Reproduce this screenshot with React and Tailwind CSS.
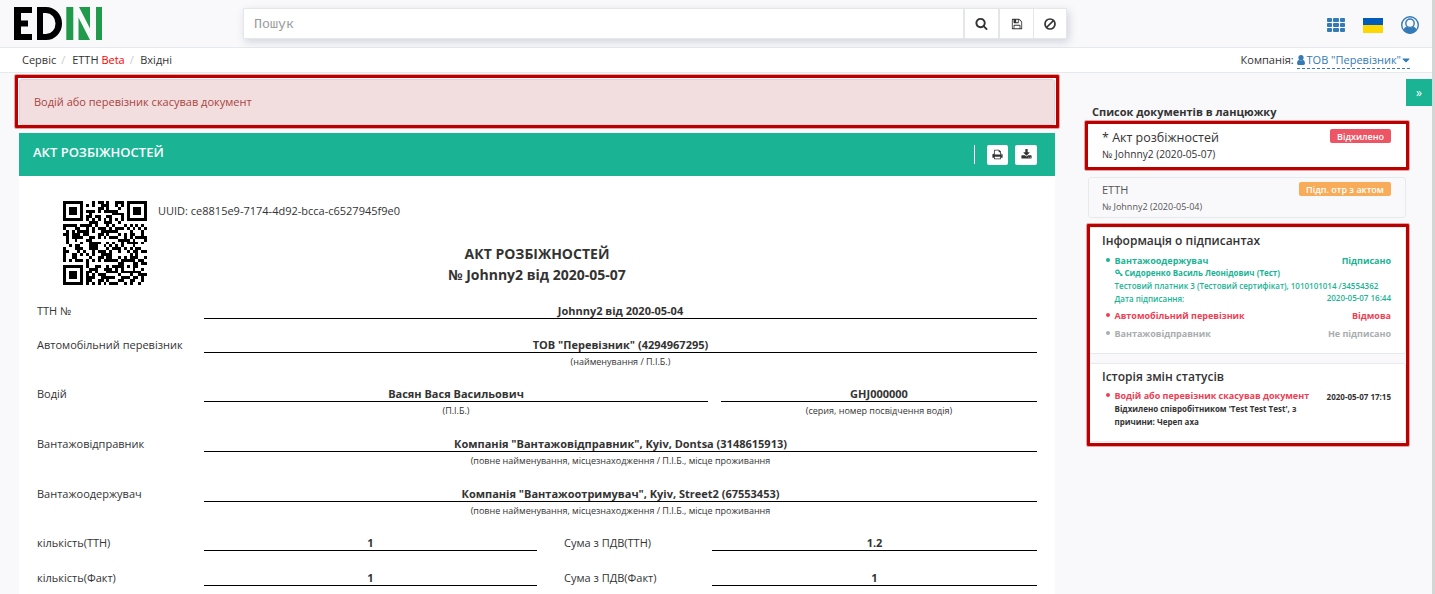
import React from 'react';
import { FaCaretDown } from 'react-icons/fa';

/* ---------- QR code, version 3 (29 x 29), level L, byte mode ---------- */
const N = 29;
const DATA_BYTES = 55;
const EC_BYTES = 15;

function gfMul(a, b) {
  let r = 0;
  for (let i = 7; i >= 0; i--) {
    r = (r << 1) ^ ((r >>> 7) * 0x11d);
    r ^= ((b >>> i) & 1) * a;
  }
  return r & 0xff;
}

function ecc(data, degree) {
  const gen = new Array(degree).fill(0);
  gen[degree - 1] = 1;
  let root = 1;
  for (let i = 0; i < degree; i++) {
    for (let j = 0; j < degree; j++) {
      gen[j] = gfMul(gen[j], root);
      if (j + 1 < degree) gen[j] ^= gen[j + 1];
    }
    root = gfMul(root, 2);
  }
  const res = new Array(degree).fill(0);
  data.forEach((b) => {
    const f = b ^ res.shift();
    res.push(0);
    gen.forEach((g, i) => { res[i] ^= gfMul(g, f); });
  });
  return res;
}

const MASK = 2;
const masked = (x) => x % 3 === 0;

function build(text) {
  const bits = [];
  const push = (v, n) => { for (let i = n - 1; i >= 0; i--) bits.push((v >>> i) & 1); };
  push(4, 4);
  push(text.length, 8);
  [...text].forEach((c) => push(c.charCodeAt(0), 8));
  push(0, 4);
  const bytes = [];
  for (let i = 0; i < bits.length; i += 8) bytes.push(parseInt(bits.slice(i, i + 8).join(''), 2));
  for (let p = 0xec; bytes.length < DATA_BYTES; p ^= 0xfd) bytes.push(p);
  const all = bytes.concat(ecc(bytes, EC_BYTES));

  const m = Array.from({ length: N }, () => new Array(N).fill(false));
  const fn = Array.from({ length: N }, () => new Array(N).fill(false));
  const set = (x, y, v) => {
    if (x >= 0 && x < N && y >= 0 && y < N) { m[y][x] = !!v; fn[y][x] = true; }
  };
  for (let i = 0; i < N; i++) { set(6, i, i % 2 === 0); set(i, 6, i % 2 === 0); }
  [[3, 3], [N - 4, 3], [3, N - 4]].forEach(([cx, cy]) => {
    for (let dy = -4; dy <= 4; dy++) for (let dx = -4; dx <= 4; dx++) {
      const d = Math.max(Math.abs(dx), Math.abs(dy));
      set(cx + dx, cy + dy, d !== 2 && d !== 4);
    }
  });
  for (let dy = -2; dy <= 2; dy++) for (let dx = -2; dx <= 2; dx++) {
    set(22 + dx, 22 + dy, Math.max(Math.abs(dx), Math.abs(dy)) !== 1);
  }
  const d = (1 << 3) | MASK;
  let rem = d;
  for (let i = 0; i < 10; i++) rem = (rem << 1) ^ ((rem >>> 9) * 0x537);
  const f = ((d << 10) | rem) ^ 0x5412;
  const bit = (i) => (f >>> i) & 1;
  for (let i = 0; i <= 5; i++) set(8, i, bit(i));
  set(8, 7, bit(6)); set(8, 8, bit(7)); set(7, 8, bit(8));
  for (let i = 9; i < 15; i++) set(14 - i, 8, bit(i));
  for (let i = 0; i < 8; i++) set(N - 1 - i, 8, bit(i));
  for (let i = 8; i < 15; i++) set(8, N - 15 + i, bit(i));
  set(8, N - 8, 1);

  let k = 0;
  for (let right = N - 1; right >= 1; right -= 2) {
    if (right === 6) right = 5;
    for (let v = 0; v < N; v++) for (let j = 0; j < 2; j++) {
      const x = right - j;
      const y = ((right + 1) & 2) === 0 ? N - 1 - v : v;
      if (!fn[y][x]) {
        const b = k < all.length * 8 ? (all[k >>> 3] >>> (7 - (k & 7))) & 1 : 0;
        m[y][x] = !!b !== masked(x);
        k++;
      }
    }
  }
  return m;
}

const UUID = 'ce8815e9-7174-4d92-bcca-c6527945f9e0';

function Qr() {
  const path = build(UUID).map((row, y) => row.map((on, x) => (on ? `M${x} ${y}h1v1h-1z` : '')).join('')).join('');
  return (
    <svg viewBox="0 0 29 29" className="h-[84px] w-[84px] shrink-0" shapeRendering="crispEdges"><path d={path} /></svg>
  );
}

/* ---------- Font Awesome 4 style glyphs ---------- */
const Glyph = ({ d, className, box = '0 0 1792 1792' }) => (
  <svg viewBox={box} className={className} fill="currentColor"><path d={d} /></svg>
);
const SEARCH = 'M1216 832q0-185-131.500-316.500t-316.500-131.500-316.500 131.500-131.500 316.500 131.500 316.500 316.500 131.500 316.500-131.500 131.500-316.500zm512 832q0 52-38 90t-90 38q-54 0-90-38l-343-342q-179 124-399 124-143 0-273.500-55.500t-225-150-150-225-55.500-273.500 55.500-273.500 150-225 225-150 273.500-55.500 273.500 55.500 225 150 150 225 55.500 273.500q0 220-124 399l343 343q37 37 37 90z';
const SAVE = 'M512 1536h768v-384h-768v384zm896 0h128v-896q0-14-10-38.500t-20-34.500l-281-281q-10-10-34-20t-39-10v416q0 40-28 68t-68 28h-576q-40 0-68-28t-28-68v-416h-128v1280h128v-416q0-40 28-68t68-28h832q40 0 68 28t28 68v416zm-384-928v-320q0-13-9.500-22.500t-22.500-9.500h-192q-13 0-22.500 9.500t-9.500 22.500v320q0 13 9.500 22.500t22.500 9.500h192q13 0 22.500-9.500t9.500-22.500zm640 32v928q0 40-28 68t-68 28h-1344q-40 0-68-28t-28-68v-1344q0-40 28-68t68-28h928q40 0 88 20t76 48l280 280q28 28 48 76t20 88z';
const PRINT = 'M448 1536h896v-256h-896v256zm0-640h896v-384h-160q-40 0-68-28t-28-68v-160h-640v640zm1152 64q0-26-19-45t-45-19-45 19-19 45 19 45 45 19 45-19 19-45zm128 0v416q0 13-9.500 22.500t-22.500 9.500h-224v160q0 40-28 68t-68 28h-960q-40 0-68-28t-28-68v-160h-224q-13 0-22.500-9.500t-9.500-22.500v-416q0-79 56.500-135.500t135.500-56.500h64v-544q0-40 28-68t68-28h672q40 0 88 20t76 48l152 152q28 28 48 76t20 88v256h64q79 0 135.500 56.500t56.500 135.500z';
const DOWNLOAD = 'M1344 1344q0-26-19-45t-45-19-45 19-19 45 19 45 45 19 45-19 19-45zm256 0q0-26-19-45t-45-19-45 19-19 45 19 45 45 19 45-19 19-45zm128-224v320q0 40-28 68t-68 28h-1472q-40 0-68-28t-28-68v-320q0-40 28-68t68-28h465l135 136q58 56 136 56t136-56l136-136h464q40 0 68 28t28 68zm-325-569q17 41-14 70l-448 448q-18 19-45 19t-45-19l-448-448q-31-29-14-70 17-39 59-39h256v-448q0-26 19-45t45-19h256q26 0 45 19t19 45v448h256q42 0 59 39z';

function Logo() {
  return (
    <svg viewBox="0 0 88 33" className="h-[33px] w-[88px]">
      <path d="M0 0h18v6H7v7.500h7v6H7V27h11v6H0z" />
      <path fillRule="evenodd" d="M23 0h9a16 16.500 0 0 1 0 33h-9zM29 6v21h3a9.500 10.500 0 0 0 0-21z" />
      <path fill="#229a4b" d="M52.300 0h7v33h-7zM65 0h11v21.500zM64.500 10.500 76 33H64.500zM82 0h6v33h-6z" />
    </svg>
  );
}

const Field = ({ children, className = '' }) => (
  <div className={'h-[17px] border-b border-black text-center text-[11px] leading-[18px] font-bold ' + className}>{children}</div>
);
const Note = ({ children }) => <div className="pt-[2px] text-center text-[9px] leading-[13px]">{children}</div>;
const Label = ({ children, className = '' }) => <div className={'shrink-0 leading-[18px] ' + className}>{children}</div>;

const Row = ({ label, note, children, className }) => (
  <div className={'flex ' + className}>
    <Label className="w-[167px]">{label}</Label>
    <div className="flex-1"><Field>{children}</Field>{note && <Note>{note}</Note>}</div>
  </div>
);
const Pair = ({ a, av, b, bv, className }) => (
  <div className={'flex ' + className}>
    <Label className="w-[167px]">{a}</Label>
    <Field className="w-[333px]">{av}</Field>
    <Label className="w-[175px] pl-[27px]">{b}</Label>
    <Field className="flex-1">{bv}</Field>
  </div>
);

const Frame = ({ className }) => (
  <div className={'pointer-events-none absolute rounded-[1px] border-3 border-[#bb0000] outline outline-[#bb0000]/35 ' + className} />
);
const Dot = () => <span className="mt-[4px] mr-[4.500px] h-[4px] w-[4px] shrink-0 rounded-full bg-current" />;

export default function App() {
  return (
    <div className="relative flex h-[594px] w-[1435px] flex-col overflow-hidden bg-[#f9f9fb] font-['Open_Sans','Noto_Sans',sans-serif] text-[11px] text-[#333]">
      <header className="flex h-[48px] shrink-0 border-b border-[#e7eaec] pl-[14px]">
        <div className="w-[229px] pt-[7px]"><Logo /></div>
        <div className="mt-[8px] flex h-[31px] w-[824px] border border-[#e5e6e7] bg-white text-[#333] shadow-[2px_3px_8px_rgba(120,130,160,0.3)]">
          <div className="flex-1 pl-[10px] font-['Liberation_Mono',monospace] text-[13.333px] leading-[31px] text-[#999]">Пошук</div>
          <div className="flex w-[35px] items-center justify-center border-l-2 border-[#e5e6e7]"><Glyph d={SEARCH} className="h-[13px] w-[13px]" /></div>
          <div className="flex w-[35px] items-center justify-center border-l-2 border-[#e5e6e7]"><Glyph d={SAVE} className="h-[12px] w-[12px]" /></div>
          <div className="flex w-[33px] items-center justify-center border-l border-[#e5e6e7]">
            <svg viewBox="0 0 12 12" className="h-[12px] w-[12px]" fill="none" stroke="currentColor" strokeWidth="1.700"><circle cx="6" cy="6" r="5" /><path d="M2.500 9.500l7-7" /></svg>
          </div>
        </div>
        <div className="flex flex-1 items-center justify-end gap-[18px] pt-[3px] pr-[16px] text-[#337ab7]">
          <div className="grid grid-cols-3 gap-[1px]">
            {[0, 1, 2, 3, 4, 5, 6, 7, 8].map((i) => <span key={i} className="h-[4px] w-[5.500px] rounded-[1px] bg-current" />)}
          </div>
          <div className="h-[15px] w-[20px] bg-[#ffd700]"><div className="h-1/2 bg-[#005bbb]" /></div>
          <svg viewBox="0 0 18 18" className="h-[18px] w-[18px]">
            <circle cx="9" cy="9" r="8.300" fill="none" stroke="currentColor" strokeWidth="1.400" />
            <path fill="currentColor" d="M2.600 13.500q.8-2.300 3.200-2.900 1.300 1.400 3.200 1.400t3.200-1.400q2.400.6 3.200 2.900-2.400 3.900-6.400 3.900t-6.400-3.900z" />
            <circle cx="9" cy="7.200" r="4.200" fill="none" stroke="currentColor" strokeWidth="1.400" />
          </svg>
        </div>
      </header>

      <nav className="flex h-[25px] shrink-0 items-center justify-between border-b border-[#e7eaec] bg-white pr-[25px] pl-[22px]">
        <div className="flex">
          <span>Сервіс</span><span className="w-[16px] pl-[5px] text-[#ccc]">/</span>
          <span>ЕТТН <span className="text-[#f00]">Beta</span></span><span className="w-[15.500px] pl-[5px] text-[#ccc]">/</span>
          <span>Вхідні</span>
        </div>
        <div className="flex leading-[16px]">
          Компанія:&nbsp;
          <span className="flex items-center border-b border-dashed border-[#337ab7] text-[#337ab7]">
            <svg viewBox="0 0 8 10" className="mr-[2px] h-[10px] w-[8px]" fill="currentColor"><circle cx="4" cy="2.700" r="2.600" /><path d="M2 4.800q-2 .6-2 3.500 0 1.700 1.500 1.700h5q1.500 0 1.500-1.700 0-2.900-2-3.500-2 1.500-4 0z" /></svg>
            ТОВ "Перевізник"<FaCaretDown className="ml-[1px] h-[12px] w-[8px]" />
          </span>
        </div>
      </nav>

      <div className="flex flex-1 pl-[19px]">
        <main className="flex w-[1036px] flex-col pt-[6px]">
          <div className="h-[46px] shrink-0 rounded-[3px] border border-[#e6cfd6] bg-[#f2dede] pl-[14px] leading-[43px] text-[#a94442]">
            Водій або перевізник скасував документ
          </div>
          <div className="mt-[8px] flex h-[43px] shrink-0 justify-between bg-[#1ab394] pr-[18px] pl-[14px] text-white">
            <h1 className="pt-[9px] text-[13px] leading-[20px] font-semibold">АКТ РОЗБІЖНОСТЕЙ</h1>
            <div className="flex items-center text-[#333]">
              <span className="mr-[12px] h-[19px] w-px bg-white" />
              <span className="mr-[7px] flex h-[20px] w-[21px] items-center justify-center rounded-[2px] bg-white"><Glyph d={PRINT} className="h-[11px] w-[11px]" /></span>
              <span className="flex h-[20px] w-[22px] items-center justify-center rounded-[2px] bg-white"><Glyph d={DOWNLOAD} className="h-[11px] w-[11px]" /></span>
            </div>
          </div>

          <section className="flex-1 bg-white px-[18px] pt-[25px]">
            <div className="flex h-[42px] pl-[26px]"><Qr /><div className="pt-[1px] pl-[11px] leading-[18px]">UUID: {UUID}</div></div>
            <h2 className="h-[59px] text-center text-[14px] leading-[21px] font-bold">АКТ РОЗБІЖНОСТЕЙ<br />№ Johnny2 від 2020-05-07</h2>
            <Row className="h-[34px]" label="ТТН №">Johnny2 від 2020-05-04</Row>
            <Row className="h-[49px]" label="Автомобільний перевізник" note="(найменування / П.І.Б.)">ТОВ "Перевізник" (4294967295)</Row>
            <div className="flex h-[50px]">
              <Label className="w-[167px]">Водій</Label>
              <div className="mr-[13px] w-[504px]"><Field>Васян Вася Васильович</Field><Note>(П.І.Б.)</Note></div>
              <div className="flex-1"><Field>GHJ000000</Field><Note>(серия, номер посвідчення водія)</Note></div>
            </div>
            <Row className="h-[50px]" label="Вантажовідправник" note="(повне найменування, місцезнаходження / П.І.Б., місце проживання">Компанія "Вантажовідправник", Kyiv, Dontsa (3148615913)</Row>
            <Row className="h-[49px]" label="Вантажоодержувач" note="(повне найменування, місцезнаходження / П.І.Б., місце проживання">Компанія "Вантажоотримувач", Kyiv, Street2 (67553453)</Row>
            <Pair className="h-[35px]" a="кількість(ТТН)" av="1" b="Сума з ПДВ(ТТН)" bv="1.2" />
            <Pair className="h-[25px]" a="кількість(Факт)" av="1" b="Сума з ПДВ(Факт)" bv="1" />
          </section>
        </main>

        <aside className="ml-[33px] flex w-[318px] flex-col pt-[31px]">
          <h3 className="h-[19px] pl-[4px] leading-[16px] font-bold">Список документів в ланцюжку</h3>
          <div className="flex h-[46px] justify-between bg-white pt-[6px] pr-[15px] pl-[14px]">
            <div><div className="text-[12.500px] leading-[17px] font-medium">* Акт розбіжностей</div><div className="text-[10.200px] leading-[17px] font-medium">№ Johnny2 (2020-05-07)</div></div>
            <span className="h-[14px] w-[61px] rounded-[2px] bg-[#ed5565] text-center text-[9px] leading-[15px] font-semibold text-white">Відхилено</span>
          </div>
          <div className="mt-[8px] flex h-[41px] justify-between rounded-[3px] border border-[#e7eaec] pt-[4px] pr-[14px] pl-[13px] text-[#555]">
            <div><div className="leading-[16px]">ЕТТН</div><div className="text-[9px] leading-[17px]">№ Johnny2 (2020-05-04)</div></div>
            <span className="h-[14px] w-[92px] rounded-[2px] bg-[#f8ac59] text-center text-[9px] leading-[15px] font-semibold text-white">Підп. отр з актом</span>
          </div>

          <div className="mt-[9px] h-[127px] rounded-[3px] border border-[#e7eaec] bg-white pt-[4px] pr-[14px] pl-[13px] text-[9px] leading-[13px]">
            <h4 className="h-[22px] text-[12px] leading-[17px] font-semibold">Інформація о підписантах</h4>
            <div className="flex pl-[4px] text-[#1ab394]">
              <Dot />
              <div className="flex-1">
                <div className="flex justify-between leading-[13px] font-bold"><span>Вантажоодержувач</span><span>Підписано</span></div>
                <div className="flex items-center text-[8px] leading-[12px] font-bold">
                  <svg viewBox="0 0 8 8" className="mr-[2px] h-[8px] w-[8px]" fill="none" stroke="currentColor" strokeWidth="1.200"><circle cx="2.500" cy="2.800" r="1.700" /><path d="M4 3.500 7.500 6.500M6 5v2" /></svg>
                  Сидоренко Василь Леонідович (Тест)
                </div>
                <div className="text-[8px] font-semibold whitespace-nowrap">Тестовий платник 3 (Тестовий сертифікат), 1010101014 /34554362</div>
                <div className="flex justify-between text-[8px] font-semibold"><span>Дата підписання:</span><span className="-mt-px">2020-05-07 16:44</span></div>
              </div>
            </div>
            <div className="mt-[4px] flex pl-[4px] font-bold text-[#ed3f55]"><Dot /><span className="flex-1">Автомобільний перевізник</span><span>Відмова</span></div>
            <div className="mt-[5px] flex pl-[4px] font-bold text-[#a9adb0]"><Dot /><span className="flex-1">Вантажовідправник</span><span>Не підписано</span></div>
          </div>

          <div className="mt-[9px] h-[79px] rounded-[3px] border border-[#e7eaec] bg-white pt-[4px] pr-[14px] pl-[13px] text-[9px] leading-[13px]">
            <h4 className="h-[21px] text-[12px] leading-[17px] font-semibold">Історія змін статусів</h4>
            <div className="flex pl-[4px] font-bold">
              <span className="flex text-[#ed3f55]"><Dot /></span>
              <div className="flex-1"><div className="text-[#ed3f55]">Водій або перевізник скасував документ</div><div className="w-[190px] text-[8px]">Відхилено співробітником 'Test Test Test', з причини: Череп аха</div></div>
              <span className="pt-[1px] text-[8px]">2020-05-07 17:15</span>
            </div>
          </div>
        </aside>
        <button className="mt-[6px] h-[27px] w-[26px] bg-[#1ab394] text-[12px] leading-[26px] text-white">»</button>
      </div>

      <div className="absolute top-0 right-0 h-full w-[3px] bg-[#d4d5d5]" />
      <Frame className="top-[75px] left-[15px] h-[53px] w-[1044px]" />
      <Frame className="top-[121px] left-[1085px] h-[49px] w-[324px]" />
      <Frame className="top-[224px] left-[1087px] h-[222px] w-[322px]" />
    </div>
  );
}
